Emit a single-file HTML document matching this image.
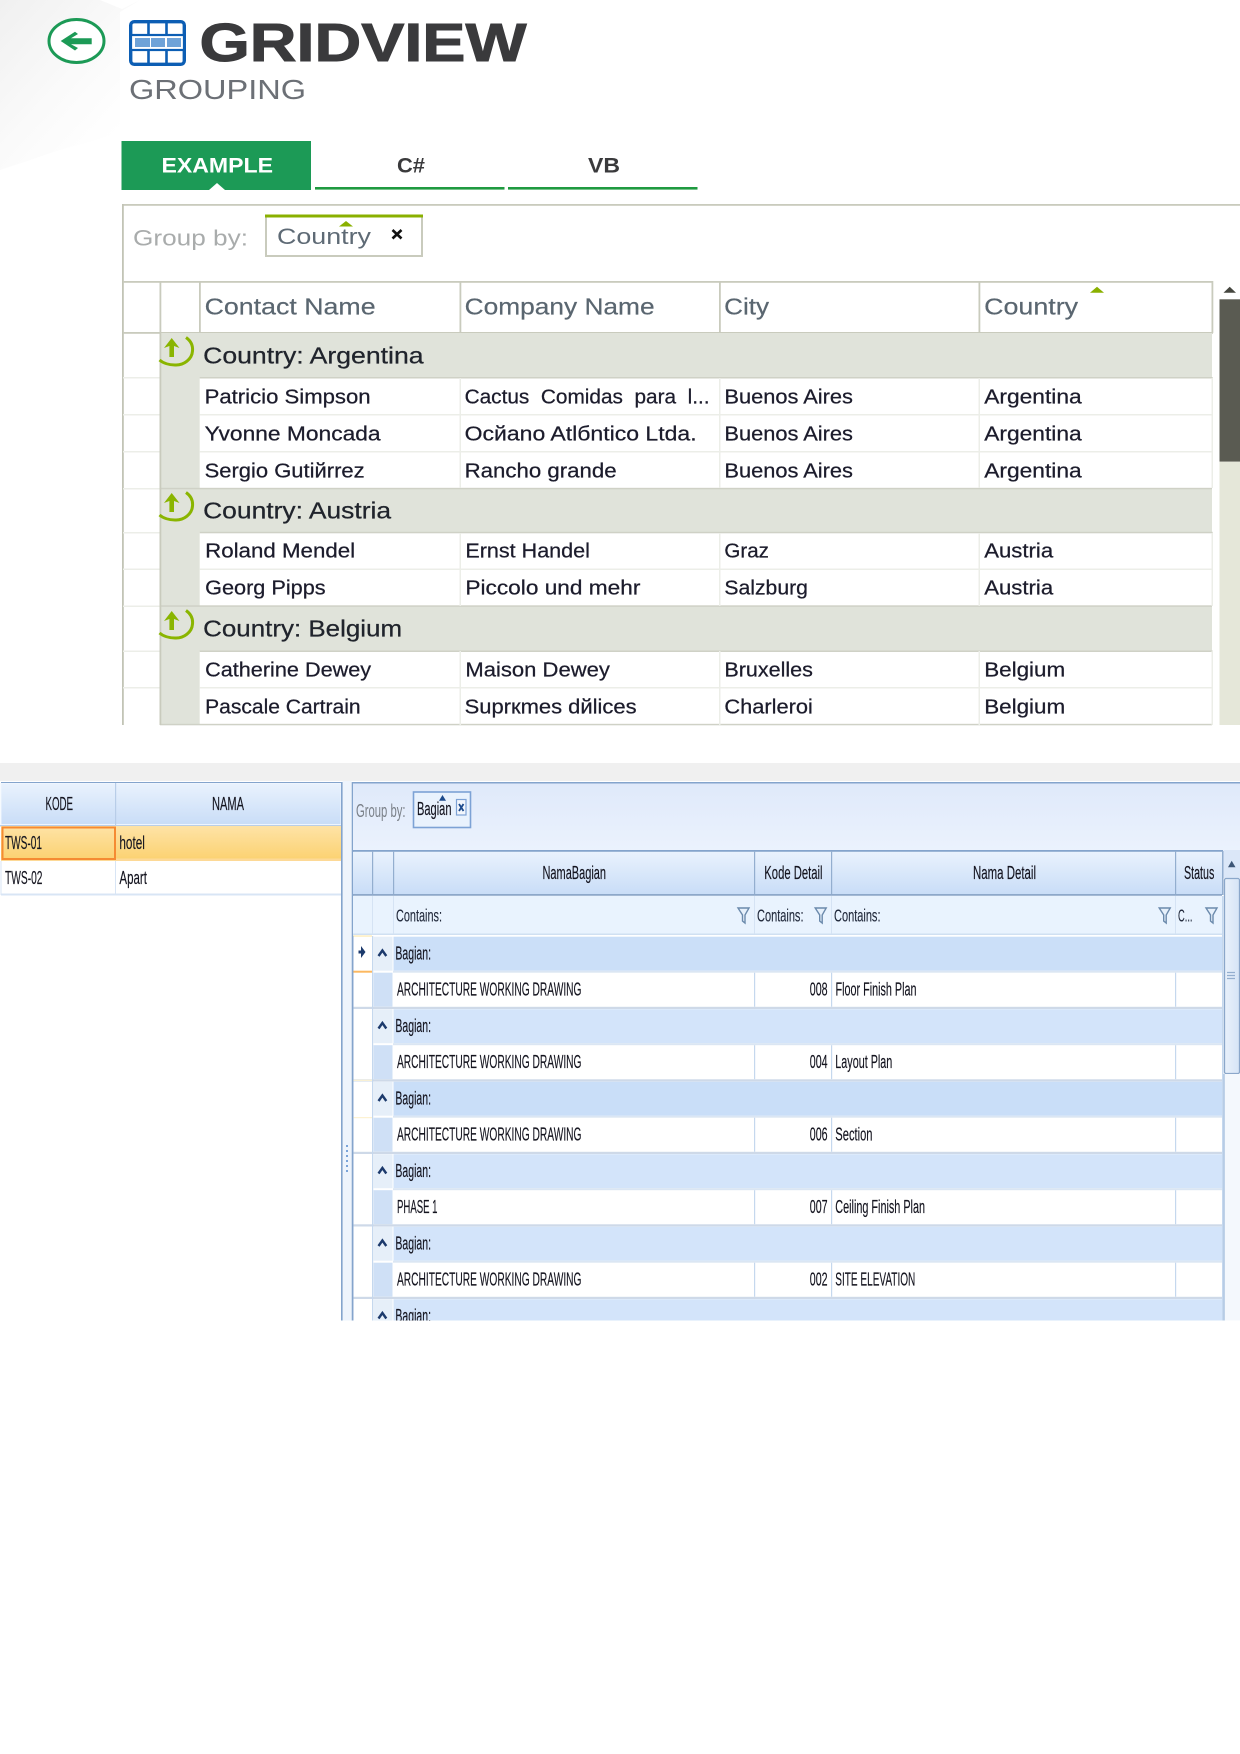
<!DOCTYPE html>
<html><head><meta charset="utf-8"><title>GridView Grouping</title>
<style>
html,body{margin:0;padding:0;background:#fff;width:1240px;height:1754px;overflow:hidden}
svg{display:block;position:absolute;left:0;top:0;filter:blur(.35px)}
text{font-family:"Liberation Sans",Arial,sans-serif;white-space:pre}
.h{font-size:23px;fill:#5a6670;stroke:#5a6670;stroke-width:.2px}
.g{font-size:23px;fill:#20242c;stroke:#20242c;stroke-width:.25px}
.r{font-size:20px;fill:#1c1c2c;stroke:#1c1c2c;stroke-width:.25px}
.n{font-size:18px;fill:#14141f;stroke:#14141f;stroke-width:.15px}
.f{font-size:17.500px;fill:#20283a;stroke:#20283a;stroke-width:.1px}
</style></head><body>
<svg width="1240" height="1754" viewBox="0 0 1240 1754" xmlns="http://www.w3.org/2000/svg">
<defs>
<linearGradient id="bgTL" x1="0" y1="0" x2="0.9" y2="1"><stop offset="0" stop-color="#f0f0f0"/><stop offset=".5" stop-color="#fafafa"/><stop offset=".85" stop-color="#ffffff"/></linearGradient>
<linearGradient id="hd" x1="0" y1="0" x2="0" y2="1"><stop offset="0" stop-color="#e9f2fd"/><stop offset="1" stop-color="#c9ddf7"/></linearGradient>
<linearGradient id="gp" x1="0" y1="0" x2="0" y2="1"><stop offset="0" stop-color="#dfe9fa"/><stop offset="1" stop-color="#ebf2fd"/></linearGradient>
<linearGradient id="sel" x1="0" y1="0" x2="0" y2="1"><stop offset="0" stop-color="#fee3a6"/><stop offset="1" stop-color="#fbd16f"/></linearGradient>
<linearGradient id="sb" x1="0" y1="0" x2="1" y2="0"><stop offset="0" stop-color="#e9f1fb"/><stop offset="1" stop-color="#d6e4f6"/></linearGradient>
<g id="up"><path d="M186 337.500 C191 341 193 346 192.500 351 C192 359 184 365.500 175 365 C169 365 163 363 159.500 360" fill="none" stroke="#8ab500" stroke-width="3"/><path d="M171.700 338 L179.500 348 L174 346 L174 357 L169.400 357 L169.400 346 L164 348 Z" fill="#8ab500"/></g>
<path id="fn" d="M0 0 H11 L7 7 V15 L4.500 13 V7 Z" fill="#e6f0fb" stroke="#6b8aac" stroke-width="1.400"/>
<g id="chev"><path d="M378.500 956 L382.400 950.500 L386.300 956" fill="none" stroke="#1c3a6c" stroke-width="2.400"/></g>
</defs>

<!-- top-left background -->
<polygon points="0,0 100,0 122,9 140,0 120,12 120,133 60,150 0,170" fill="url(#bgTL)"/>

<!-- back icon -->
<ellipse cx="76.500" cy="41" rx="27.500" ry="21.500" fill="#fff" stroke="#1c9a56" stroke-width="3"/>
<path d="M60.700 41 L75 31.700 L78 34 L71 38.300 H91.700 V44.300 H71 L78 48 L75 50.500 Z" fill="#1c9a56"/>

<!-- grid icon -->
<rect x="130.700" y="21.700" width="53.600" height="42.600" rx="3.500" fill="#fff" stroke="#0c5eb4" stroke-width="3.400"/>
<rect x="131" y="35" width="53" height="15" fill="#fff" stroke="#0c5eb4" stroke-width="2.200"/>
<rect x="135" y="38" width="15" height="9" fill="#6fa3d8"/><rect x="151" y="38" width="14" height="9" fill="#6fa3d8"/><rect x="167" y="38" width="14" height="9" fill="#6fa3d8"/>
<path d="M148.500 22 V35 M166.500 22 V35 M148.500 50 V64 M166.500 50 V64" stroke="#0c5eb4" stroke-width="2.600"/>

<text x="199.500" y="61" font-size="54" font-weight="700" fill="#3a3a3c" stroke="#3a3a3c" stroke-width="1" textLength="327" lengthAdjust="spacingAndGlyphs">GRIDVIEW</text>
<text x="129" y="99" font-size="28" fill="#6c7076" textLength="177" lengthAdjust="spacingAndGlyphs">GROUPING</text>

<!-- tabs -->
<rect x="121.500" y="141" width="189.500" height="49" fill="#1c9a56"/>
<path d="M209 190 L217 183 L225 190 Z" fill="#fff"/>
<text x="161.500" y="172.500" font-size="21" font-weight="700" fill="#fff" textLength="111.500" lengthAdjust="spacingAndGlyphs">EXAMPLE</text>
<text x="397" y="172.500" font-size="21" font-weight="700" fill="#3a3a3c" textLength="28" lengthAdjust="spacingAndGlyphs">C#</text>
<text x="588" y="172.500" font-size="21" font-weight="700" fill="#3a3a3c" textLength="32" lengthAdjust="spacingAndGlyphs">VB</text>
<rect x="315" y="187" width="189.500" height="2.600" fill="#1f9a40"/>
<rect x="508" y="187" width="189.500" height="2.600" fill="#1f9a40"/>

<!-- top panel frame -->
<rect x="122" y="204" width="1118" height="1.800" fill="#c9cbbd"/>
<rect x="122" y="204" width="1.800" height="521" fill="#c2c4b6"/>

<text x="133" y="245.500" font-size="22" fill="#a9acac" textLength="115" lengthAdjust="spacingAndGlyphs">Group by:</text>
<rect x="266" y="216" width="156" height="40" fill="#fff" stroke="#c9cbbd" stroke-width="2"/>
<rect x="265" y="214.500" width="158" height="3" fill="#8ab000"/>
<path d="M339 226.500 L346 221 L353 226.500 Z" fill="#8ab000"/>
<text x="277" y="244" font-size="22" fill="#5e6a75" textLength="94" lengthAdjust="spacingAndGlyphs">Country</text>
<path d="M392.500 230 L401.500 238.500 M401.500 230 L392.500 238.500" stroke="#111" stroke-width="2.600"/>

<!-- top grid: structure -->
<rect x="123" y="281" width="1090" height="1.800" fill="#c9cbbd"/>
<rect x="123" y="332" width="1090" height="1.800" fill="#c9cbbd"/>
<rect x="160" y="333" width="1052" height="45" fill="#e0e3da"/>
<rect x="160" y="488.300" width="1052" height="44" fill="#e0e3da"/>
<rect x="160" y="606" width="1052" height="45" fill="#e0e3da"/>
<rect x="160" y="333" width="39.700" height="392" fill="#e0e3da"/>
<!-- row lines -->
<g fill="#eceee8">
<rect x="123" y="414" width="37" height="1.500"/><rect x="199.700" y="414" width="1013" height="1.500"/>
<rect x="123" y="451" width="37" height="1.500"/><rect x="199.700" y="451" width="1013" height="1.500"/>
<rect x="123" y="377" width="37" height="1.500"/>
<rect x="123" y="488" width="37" height="1.500"/>
<rect x="123" y="532" width="37" height="1.500"/>
<rect x="123" y="568.500" width="37" height="1.500"/><rect x="199.700" y="568.500" width="1013" height="1.500"/>
<rect x="123" y="605.500" width="37" height="1.500"/>
<rect x="123" y="650.500" width="37" height="1.500"/>
<rect x="123" y="687" width="37" height="1.500"/><rect x="199.700" y="687" width="1013" height="1.500"/>
</g>
<g fill="#cfd1c6">
<rect x="199.700" y="377" width="1013" height="1.500"/>
<rect x="160" y="487.800" width="1052" height="1.500"/>
<rect x="199.700" y="531.800" width="1013" height="1.500"/>
<rect x="160" y="605.300" width="1052" height="1.500"/>
<rect x="199.700" y="650.500" width="1013" height="1.500"/>
<rect x="160" y="723.800" width="1052" height="1.500"/>
</g>
<!-- vertical separators -->
<g fill="#c9cbbd">
<rect x="159.500" y="281" width="1.800" height="444"/>
<rect x="199" y="281" width="1.800" height="52"/>
<rect x="459.500" y="281" width="1.800" height="52"/>
<rect x="719" y="281" width="1.800" height="52"/>
<rect x="978.500" y="281" width="1.800" height="52"/>
<rect x="1211.500" y="281" width="1.800" height="52"/>
</g>
<g fill="#eceee8">
<rect x="459.500" y="378" width="1.500" height="110"/><rect x="719" y="378" width="1.500" height="110"/><rect x="978.500" y="378" width="1.500" height="110"/><rect x="1211.500" y="378" width="1.500" height="110"/>
<rect x="459.500" y="533" width="1.500" height="73"/><rect x="719" y="533" width="1.500" height="73"/><rect x="978.500" y="533" width="1.500" height="73"/><rect x="1211.500" y="533" width="1.500" height="73"/>
<rect x="459.500" y="651" width="1.500" height="74"/><rect x="719" y="651" width="1.500" height="74"/><rect x="978.500" y="651" width="1.500" height="74"/><rect x="1211.500" y="651" width="1.500" height="74"/>
</g>

<!-- header text -->
<g transform="translate(-.4,.6)">
<text class="h" x="205" y="314" textLength="171" lengthAdjust="spacingAndGlyphs">Contact Name</text>
<text class="h" x="465" y="314" textLength="190" lengthAdjust="spacingAndGlyphs">Company Name</text>
<text class="h" x="724.500" y="314" textLength="45" lengthAdjust="spacingAndGlyphs">City</text>
<text class="h" x="984.500" y="314" textLength="94" lengthAdjust="spacingAndGlyphs">Country</text>
</g>
<path d="M1090 292.700 L1097 286.700 L1104 292.700 Z" fill="#8ab000"/>

<!-- group rows -->
<use href="#up"/>
<use href="#up" y="155"/>
<use href="#up" y="273"/>
<g transform="translate(-.4,.6)">
<text class="g" x="203.500" y="363" textLength="220.500" lengthAdjust="spacingAndGlyphs">Country: Argentina</text>
<text class="g" x="203.500" y="518" textLength="188" lengthAdjust="spacingAndGlyphs">Country: Austria</text>
<text class="g" x="203.500" y="636" textLength="199" lengthAdjust="spacingAndGlyphs">Country: Belgium</text>

<!-- data -->
<text class="r" x="205" y="403" textLength="166" lengthAdjust="spacingAndGlyphs">Patricio Simpson</text>
<text class="r" x="465" y="403" textLength="245" lengthAdjust="spacingAndGlyphs">Cactus  Comidas  para  l...</text>
<text class="r" x="724.800" y="403" textLength="128.500" lengthAdjust="spacingAndGlyphs">Buenos Aires</text>
<text class="r" x="984.600" y="403" textLength="97.500" lengthAdjust="spacingAndGlyphs">Argentina</text>

<text class="r" x="205" y="440" textLength="176" lengthAdjust="spacingAndGlyphs">Yvonne Moncada</text>
<text class="r" x="465" y="440" textLength="232" lengthAdjust="spacingAndGlyphs">Ocйano Atlбntico Ltda.</text>
<text class="r" x="724.800" y="440" textLength="128.500" lengthAdjust="spacingAndGlyphs">Buenos Aires</text>
<text class="r" x="984.600" y="440" textLength="97.500" lengthAdjust="spacingAndGlyphs">Argentina</text>

<text class="r" x="205" y="476.700" textLength="160" lengthAdjust="spacingAndGlyphs">Sergio Gutiйrrez</text>
<text class="r" x="465" y="476.700" textLength="152" lengthAdjust="spacingAndGlyphs">Rancho grande</text>
<text class="r" x="724.800" y="476.700" textLength="128.500" lengthAdjust="spacingAndGlyphs">Buenos Aires</text>
<text class="r" x="984.600" y="476.700" textLength="97.500" lengthAdjust="spacingAndGlyphs">Argentina</text>

<text class="r" x="205.500" y="557" textLength="150" lengthAdjust="spacingAndGlyphs">Roland Mendel</text>
<text class="r" x="465.800" y="557" textLength="124.500" lengthAdjust="spacingAndGlyphs">Ernst Handel</text>
<text class="r" x="724.800" y="557" textLength="44.500" lengthAdjust="spacingAndGlyphs">Graz</text>
<text class="r" x="984.600" y="557" textLength="69" lengthAdjust="spacingAndGlyphs">Austria</text>

<text class="r" x="205.500" y="594" textLength="120.500" lengthAdjust="spacingAndGlyphs">Georg Pipps</text>
<text class="r" x="465.800" y="594" textLength="175" lengthAdjust="spacingAndGlyphs">Piccolo und mehr</text>
<text class="r" x="724.800" y="594" textLength="83.500" lengthAdjust="spacingAndGlyphs">Salzburg</text>
<text class="r" x="984.600" y="594" textLength="69" lengthAdjust="spacingAndGlyphs">Austria</text>

<text class="r" x="205.500" y="676" textLength="166" lengthAdjust="spacingAndGlyphs">Catherine Dewey</text>
<text class="r" x="465.800" y="676" textLength="144.500" lengthAdjust="spacingAndGlyphs">Maison Dewey</text>
<text class="r" x="724.800" y="676" textLength="88.500" lengthAdjust="spacingAndGlyphs">Bruxelles</text>
<text class="r" x="984.600" y="676" textLength="81" lengthAdjust="spacingAndGlyphs">Belgium</text>

<text class="r" x="205.500" y="713" textLength="155.500" lengthAdjust="spacingAndGlyphs">Pascale Cartrain</text>
<text class="r" x="465" y="713" textLength="172" lengthAdjust="spacingAndGlyphs">Suprкmes dйlices</text>
<text class="r" x="724.800" y="713" textLength="88.500" lengthAdjust="spacingAndGlyphs">Charleroi</text>
<text class="r" x="984.600" y="713" textLength="81" lengthAdjust="spacingAndGlyphs">Belgium</text>
</g>

<!-- top scrollbar -->
<path d="M1223.500 292.700 L1229.700 286.700 L1236 292.700 Z" fill="#45463f"/>
<rect x="1219.500" y="299.300" width="20.500" height="162.400" fill="#5a5b52"/>
<rect x="1219.500" y="461.700" width="20.500" height="263.300" fill="#e5e7d9"/>

<!-- gray band -->
<rect x="0" y="763" width="1240" height="18" fill="#f0f0f0"/>

<!-- bottom left table -->
<rect x="1" y="782" width="340" height="1.800" fill="#84a4cc"/>
<rect x="1" y="783.500" width="340" height="41" fill="url(#hd)" stroke="#eef5fe" stroke-width="1"/>
<rect x="0" y="825" width="341" height="1.500" fill="#b9cee8"/>
<rect x="115" y="783" width="1.200" height="42" fill="#b8cde8"/>
<rect x="1" y="826" width="340" height="35" fill="url(#sel)"/>
<rect x="1" y="858.500" width="340" height="2.500" fill="#fdd996"/>
<rect x="2.500" y="827.500" width="112.500" height="31.500" fill="none" stroke="#f58b33" stroke-width="2"/>
<rect x="1" y="893.500" width="340" height="2" fill="#d8e5f5"/>
<rect x="115" y="861" width="1" height="33" fill="#d8e5f5"/>
<rect x="0.500" y="861" width="1" height="34" fill="#d8e5f5"/>
<text class="n" x="45.500" y="810" textLength="27.500" lengthAdjust="spacingAndGlyphs">KODE</text>
<text class="n" x="212" y="810" textLength="32" lengthAdjust="spacingAndGlyphs">NAMA</text>
<text class="n" x="5" y="849" textLength="37" lengthAdjust="spacingAndGlyphs">TWS-01</text>
<text class="n" x="119.400" y="849" textLength="25.500" lengthAdjust="spacingAndGlyphs">hotel</text>
<text class="n" x="5" y="884" textLength="37.500" lengthAdjust="spacingAndGlyphs">TWS-02</text>
<text class="n" x="119.400" y="884" textLength="27.500" lengthAdjust="spacingAndGlyphs">Apart</text>

<!-- splitter -->
<rect x="342.500" y="781" width="9" height="539.500" fill="#eef4fc"/>
<rect x="341" y="782" width="1.600" height="538.500" fill="#84a4cc"/>
<rect x="351.700" y="782" width="1.600" height="538.500" fill="#84a4cc"/>
<path d="M347 1145 V1173" stroke="#5d8fd0" stroke-width="1.600" stroke-dasharray="2 3"/>

<!-- right: group panel -->
<rect x="353" y="782" width="887" height="1.800" fill="#84a4cc"/>
<rect x="353" y="783.500" width="887" height="67" fill="url(#gp)"/>
<text x="356" y="817" font-size="18" fill="#7a8088" textLength="49.500" lengthAdjust="spacingAndGlyphs">Group by:</text>
<rect x="413.500" y="792" width="57" height="35.500" fill="#e9f2fd" stroke="#7da2d5" stroke-width="1.600"/>
<path d="M439 800.700 L442.500 795 L446 800.700 Z" fill="#1c4a8c"/>
<text class="n" x="417" y="815" textLength="34.500" lengthAdjust="spacingAndGlyphs">Bagian</text>
<rect x="456.500" y="799.500" width="9.500" height="15.500" fill="#f2f6fc" stroke="#7da2d5" stroke-width="1.200"/>
<path d="M459 804 L463.500 811 M463.500 804 L459 811" stroke="#1c4a8c" stroke-width="1.800"/>

<!-- right: grid header -->
<rect x="353" y="850" width="870" height="1.800" fill="#84a4cc"/>
<rect x="353" y="852" width="869" height="42" fill="url(#hd)"/>
<rect x="353" y="894" width="869" height="1.800" fill="#8da8ca"/>
<g fill="#93aecf">
<rect x="372" y="851" width="1.200" height="43"/><rect x="393" y="851" width="1.200" height="43"/>
<rect x="754" y="851" width="1.200" height="43"/><rect x="831" y="851" width="1.200" height="43"/>
<rect x="1175" y="851" width="1.200" height="43"/><rect x="1222" y="851" width="1.500" height="44"/>
</g>
<text class="n" x="542.500" y="879" textLength="63.500" lengthAdjust="spacingAndGlyphs">NamaBagian</text>
<text class="n" x="764.300" y="879" textLength="58.200" lengthAdjust="spacingAndGlyphs">Kode Detail</text>
<text class="n" x="973" y="879" textLength="63" lengthAdjust="spacingAndGlyphs">Nama Detail</text>
<text class="n" x="1184" y="879" textLength="30.300" lengthAdjust="spacingAndGlyphs">Status</text>

<!-- filter row -->
<rect x="353" y="896" width="869" height="38" fill="#e9f3fe"/>
<rect x="353" y="933.500" width="869" height="1.500" fill="#d0e0f2"/>
<g fill="#d5e3f4">
<rect x="372" y="896" width="1" height="38"/><rect x="393" y="896" width="1" height="38"/><rect x="754" y="896" width="1" height="38"/><rect x="831" y="896" width="1" height="38"/><rect x="1175" y="896" width="1" height="38"/>
</g>
<text class="f" x="396" y="921.500" textLength="46" lengthAdjust="spacingAndGlyphs">Contains:</text>
<text class="f" x="757" y="921.500" textLength="46.500" lengthAdjust="spacingAndGlyphs">Contains:</text>
<text class="f" x="834" y="921.500" textLength="46.500" lengthAdjust="spacingAndGlyphs">Contains:</text>
<text class="f" x="1178" y="921.500" textLength="14.500" lengthAdjust="spacingAndGlyphs">C...</text>
<use href="#fn" x="738" y="908"/><use href="#fn" x="815.200" y="908"/><use href="#fn" x="1159.200" y="908"/><use href="#fn" x="1206" y="908"/>

<!-- group + data rows -->
<g fill="#d3e4fa">
<rect x="393.500" y="936.700" width="829" height="34" fill="#cbdff8"/>
<rect x="393.500" y="1009.200" width="829" height="34"/>
<rect x="393.500" y="1081.700" width="829" height="34" fill="#c9def8"/>
<rect x="393.500" y="1154.200" width="829" height="34"/>
<rect x="393.500" y="1226.700" width="829" height="34"/>
<rect x="393.500" y="1299.200" width="829" height="21.500"/>
</g>
<g fill="#e6eff9">
<rect x="373.500" y="936.700" width="19" height="34"/><rect x="373.500" y="1009.200" width="19" height="34"/><rect x="373.500" y="1081.700" width="19" height="34"/><rect x="373.500" y="1154.200" width="19" height="34"/><rect x="373.500" y="1226.700" width="19" height="34"/><rect x="373.500" y="1299.200" width="19" height="21.500"/>
</g>
<g fill="#cfe0f6">
<rect x="373.500" y="972.700" width="19" height="34"/><rect x="373.500" y="1045.200" width="19" height="34"/><rect x="373.500" y="1117.700" width="19" height="34"/><rect x="373.500" y="1190.200" width="19" height="34"/><rect x="373.500" y="1262.700" width="19" height="34"/>
</g>
<g fill="#ced9e8">
<rect x="353" y="1006.800" width="869" height="2.200"/><rect x="353" y="1079.300" width="869" height="2.200"/><rect x="353" y="1151.800" width="869" height="2.200"/><rect x="353" y="1224.300" width="869" height="2.200"/><rect x="353" y="1296.800" width="869" height="2.200"/>
</g>
<g fill="#dbe6f3">
<rect x="393" y="970.700" width="829" height="2"/><rect x="393" y="1043.200" width="829" height="2"/><rect x="393" y="1115.700" width="829" height="2"/><rect x="393" y="1188.200" width="829" height="2"/><rect x="393" y="1260.700" width="829" height="2"/>
</g>
<!-- data row vertical lines -->
<g fill="#c5d8ee">
<rect x="372" y="936" width="1.200" height="384.500"/>
<rect x="754" y="972.700" width="1.200" height="34"/><rect x="831" y="972.700" width="1.200" height="34"/><rect x="1175" y="972.700" width="1.200" height="34"/>
<rect x="754" y="1045.200" width="1.200" height="34"/><rect x="831" y="1045.200" width="1.200" height="34"/><rect x="1175" y="1045.200" width="1.200" height="34"/>
<rect x="754" y="1117.700" width="1.200" height="34"/><rect x="831" y="1117.700" width="1.200" height="34"/><rect x="1175" y="1117.700" width="1.200" height="34"/>
<rect x="754" y="1190.200" width="1.200" height="34"/><rect x="831" y="1190.200" width="1.200" height="34"/><rect x="1175" y="1190.200" width="1.200" height="34"/>
<rect x="754" y="1262.700" width="1.200" height="34"/><rect x="831" y="1262.700" width="1.200" height="34"/><rect x="1175" y="1262.700" width="1.200" height="34"/>
<rect x="1222" y="896" width="1.500" height="424.500"/>
</g>
<!-- indicator -->
<rect x="353" y="935.300" width="19" height="1.500" fill="#fdeec0"/>
<rect x="353" y="970.700" width="19" height="2" fill="#fcb860"/>
<rect x="353" y="1079.700" width="19" height="1.200" fill="#fdf2d2"/>
<rect x="353" y="1117" width="19" height="1.200" fill="#fdf2d2"/>
<path d="M361 946 L365.500 952 L361 958 Z M358.500 950.500 H362 V953.500 H358.500 Z" fill="#1c3a6c"/>
<!-- chevrons -->
<use href="#chev"/><use href="#chev" y="72.500"/><use href="#chev" y="145"/><use href="#chev" y="217.500"/><use href="#chev" y="290"/><use href="#chev" y="362.500"/>
<!-- Bagian labels -->
<text class="n" x="395.400" y="959.300" textLength="35.600" lengthAdjust="spacingAndGlyphs">Bagian:</text>
<text class="n" x="395.400" y="1031.800" textLength="35.600" lengthAdjust="spacingAndGlyphs">Bagian:</text>
<text class="n" x="395.400" y="1104.300" textLength="35.600" lengthAdjust="spacingAndGlyphs">Bagian:</text>
<text class="n" x="395.400" y="1176.800" textLength="35.600" lengthAdjust="spacingAndGlyphs">Bagian:</text>
<text class="n" x="395.400" y="1249.300" textLength="35.600" lengthAdjust="spacingAndGlyphs">Bagian:</text>
<text class="n" x="395.400" y="1321.800" textLength="35.600" lengthAdjust="spacingAndGlyphs">Bagian:</text>
<!-- data -->
<text class="n" x="397" y="995.700" textLength="184.500" lengthAdjust="spacingAndGlyphs">ARCHITECTURE WORKING DRAWING</text>
<text class="n" x="809.800" y="995.700" textLength="17.800" lengthAdjust="spacingAndGlyphs">008</text>
<text class="n" x="835.500" y="995.700" textLength="81" lengthAdjust="spacingAndGlyphs">Floor Finish Plan</text>
<text class="n" x="397" y="1068.200" textLength="184.500" lengthAdjust="spacingAndGlyphs">ARCHITECTURE WORKING DRAWING</text>
<text class="n" x="809.800" y="1068.200" textLength="17.800" lengthAdjust="spacingAndGlyphs">004</text>
<text class="n" x="835.300" y="1068.200" textLength="57" lengthAdjust="spacingAndGlyphs">Layout Plan</text>
<text class="n" x="397" y="1140.700" textLength="184.500" lengthAdjust="spacingAndGlyphs">ARCHITECTURE WORKING DRAWING</text>
<text class="n" x="809.800" y="1140.700" textLength="17.800" lengthAdjust="spacingAndGlyphs">006</text>
<text class="n" x="835.300" y="1140.700" textLength="37.200" lengthAdjust="spacingAndGlyphs">Section</text>
<text class="n" x="397" y="1213.200" textLength="40.500" lengthAdjust="spacingAndGlyphs">PHASE 1</text>
<text class="n" x="809.800" y="1213.200" textLength="17.800" lengthAdjust="spacingAndGlyphs">007</text>
<text class="n" x="835.300" y="1213.200" textLength="89.700" lengthAdjust="spacingAndGlyphs">Ceiling Finish Plan</text>
<text class="n" x="397" y="1285.700" textLength="184.500" lengthAdjust="spacingAndGlyphs">ARCHITECTURE WORKING DRAWING</text>
<text class="n" x="809.800" y="1285.700" textLength="17.800" lengthAdjust="spacingAndGlyphs">002</text>
<text class="n" x="835.300" y="1285.700" textLength="80" lengthAdjust="spacingAndGlyphs">SITE ELEVATION</text>

<!-- bottom mask -->
<rect x="0" y="1320.500" width="1240" height="434" fill="#fff"/>
<rect x="352" y="936" width="1.400" height="384.500" fill="#84a4cc"/>

<!-- right scrollbar -->
<rect x="1223.500" y="850" width="16.500" height="28" fill="#dbe7f8"/>
<path d="M1228 867.300 L1231.700 860.700 L1235.500 867.300 Z" fill="#3d5676"/>
<rect x="1224.500" y="878.500" width="15" height="195" rx="1.500" fill="url(#sb)" stroke="#8ba7ca" stroke-width="1.300"/>
<path d="M1227 972.500 H1235 M1227 975.500 H1235 M1227 978.500 H1235" stroke="#93aecf" stroke-width="1.200"/>
<rect x="1223.500" y="1074" width="16.500" height="246.500" fill="#f4f8fd"/>
<rect x="1223.500" y="1074" width="1.200" height="246.500" fill="#a9c1de"/>
</svg>
</body></html>
